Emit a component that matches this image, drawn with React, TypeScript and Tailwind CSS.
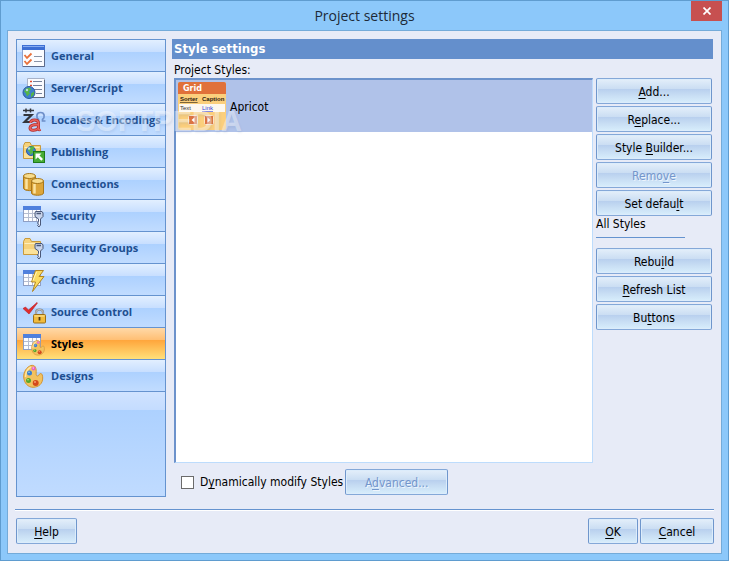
import { Fragment } from 'react'
import type { ReactNode } from 'react'

function TableShape() {
  return (
    <g>
      <rect x="1.500" y="2.500" width="17" height="15" fill="#fdfdff" stroke="#8f9fc4" />
      <rect x="1" y="2" width="18" height="4" fill="#4f80dd" />
      <path d="M2 9.500H18M2 13.500H18M6.500 6V17M10.500 6V17M14.500 6V17" stroke="#b5bdd0" fill="none" />
    </g>
  )
}

function FolderShape() {
  return (
    <g>
      <path d="M1.500 5.500 3 2.500h5l1.500 3h9v13h-17z" fill="#f6d27c" stroke="#c99a3c" />
      <path d="M2.500 7.500h15" stroke="#fdeebc" />
      <path d="M2 13h16v5h-16z" fill="#fbe29a" />
    </g>
  )
}

function KeyShape() {
  return (
    <g stroke="#4a5878" strokeLinejoin="round">
      <path d="M13.500 7.500h6.500l1 1.500v3.500l-2.500 2.500v6l-1.500 2-1.500-1.500 1-1.200-1-1.300 1-1.500V15l-3.500-2.500V9z" fill="#c9d4ea" />
      <path d="M14.500 9.500h4.500" strokeWidth="1.500" />
      <path d="M17.500 14.500v6" stroke="#f4f7ff" />
    </g>
  )
}

function GlobeShape({ cx, cy, r }: { cx: number; cy: number; r: number }) {
  return (
    <g>
      <circle cx={cx} cy={cy} r={r} fill="#3f7fd0" stroke="#2a5a9c" />
      <path
        d={`M${cx - r + 1} ${cy - 1}l2-3 4-1 1 2-2 2 1 2-3 3-1-3zM${cx + 2} ${cy + 1}l3-2v3l-3 3z`}
        fill="#55b548"
      />
      <circle cx={cx - 2} cy={cy - 2.5} r="1.200" fill="#cfe8ff" opacity="0.8" />
    </g>
  )
}

function PaletteShape() {
  return (
    <g>
      <path
        d="M9 1.500C4.500 3 1.500 8 1.700 13c.3 6 4.300 10.300 9.300 10.300 6 0 9.700-4 9.700-9.300 0-2.500-.7-4.500-2-4.500-1.700 0-1.700 2.500-3 2.500-2 0-1.500-2.200-1.500-4.500C14.200 3.500 13 .700 9 1.500z"
        fill="#f2c260"
        stroke="#d39434"
      />
      <path d="M3.500 13c0-4.500 2.500-8.500 5.500-10" fill="none" stroke="#fde6a4" strokeWidth="1.500" />
      <circle cx="11.500" cy="4.500" r="2" fill="#e85fc8" />
      <circle cx="11.300" cy="4" r="0.700" fill="#fbd3f2" />
      <circle cx="7.500" cy="9" r="2.500" fill="#3a80ce" />
      <circle cx="7" cy="8.300" r="0.800" fill="#a9d3f7" />
      <circle cx="6.500" cy="16.500" r="2.500" fill="#55a62c" />
      <circle cx="6" cy="15.800" r="0.800" fill="#bde794" />
      <circle cx="13.700" cy="19" r="3" fill="#d44a1c" />
      <circle cx="13" cy="18" r="0.900" fill="#f6a67a" />
    </g>
  )
}

const icons: Record<string, ReactNode> = {
  general: (
    <g>
      <rect x="0.500" y="1.500" width="22" height="21" fill="#fbfcff" stroke="#8fa3cf" />
      <path d="M1 22.500h21.500V3" fill="none" stroke="#5b6a8c" />
      <rect x="0" y="1" width="23" height="5" fill="#3d6fd4" />
      <path d="M1 2.500h21" stroke="#86acf2" />
      <path d="M2.500 11l2.500 3 4.500-4.500M2.500 17l2.500 3 4.500-4.500" fill="none" stroke="#e8703c" strokeWidth="1.800" />
      <path d="M12 12.500h8M12 17.500h8" stroke="#8a94a8" />
    </g>
  ),
  server: (
    <g>
      <path d="M5.500 2.500h17v19h-17z" fill="#fafbfe" stroke="#a8b2c8" />
      <path d="M7 21.500h15.500V4" fill="none" stroke="#5f6b82" />
      <path d="M8 5.500h2M8 9.500h2" stroke="#df4a2c" strokeWidth="1.500" />
      <path d="M11 5.500h9M11 9.500h9M12 13.500h8M14 17.500h6" stroke="#75829c" />
      <GlobeShape cx={7} cy={16.5} r={6} />
    </g>
  ),
  locales: (
    <g fill="none">
      <path d="M1 2.500h11M4 .5v4M8.500 .5v4" stroke="#33363d" strokeWidth="1.500" />
      <path d="M1.500 7h8l-7 7h7.500" stroke="#33363d" strokeWidth="2.200" />
      <path d="M13.500 13h3v-1.500C14 9.500 14 4.500 18.500 4.500s4.500 5 2 7V13h3" stroke="#6e8fc9" strokeWidth="1.700" />
      <path
        d="M8.500 15c0-2.500 2-3 4-3 3 0 4 1 4 3.500v5.500c0 1 1 1 2 .5M16 16.500c-5 0-8 .5-8 3.500s5.500 3 8 .5"
        stroke="#b02a2a"
        strokeWidth="3"
      />
      <path
        d="M8.500 15c0-2.500 2-3 4-3 3 0 4 1 4 3.500v5.500c0 1 1 1 2 .5M16 16.500c-5 0-8 .5-8 3.500s5.500 3 8 .5"
        stroke="#e8615c"
        strokeWidth="1.600"
      />
    </g>
  ),
  publishing: (
    <g>
      <FolderShape />
      <GlobeShape cx={9} cy={11} r={4.5} />
      <rect x="11.500" y="11.500" width="11" height="11" fill="#46ac35" stroke="#1f7a1a" />
      <path d="M13.500 13.500h6l-2 2 3.500 3.500-1.700 1.700-3.500-3.500-2.300 2.300z" fill="#fff" />
    </g>
  ),
  connections: (
    <g stroke="#a8781c">
      <path d="M1.500 4v12c0 3.500 12 3.500 12 0V4z" fill="#dda63a" />
      <path d="M4.500 7v10" stroke="#fbe3a0" strokeWidth="2.500" />
      <ellipse cx="7.500" cy="4" rx="6" ry="2.500" fill="#f8dc8c" />
      <path d="M9.500 9v12c0 3 12 3 12 0V9z" fill="#dda63a" />
      <path d="M12.500 12v9.500" stroke="#fbe3a0" strokeWidth="2.500" />
      <ellipse cx="15.500" cy="9" rx="6" ry="2.500" fill="#f8dc8c" />
    </g>
  ),
  security: (
    <g>
      <TableShape />
      <KeyShape />
    </g>
  ),
  groups: (
    <g>
      <FolderShape />
      <KeyShape />
    </g>
  ),
  caching: (
    <g>
      <TableShape />
      <path d="M13.500 2.500h8l-4.500 6h5L10.500 23.500l3-9.500H9.500z" fill="#fbdc62" stroke="#b38520" strokeLinejoin="round" />
      <path d="M14.500 4l-3.500 8.500" stroke="#fff5c0" />
    </g>
  ),
  source: (
    <g>
      <path d="M1 8.500l2.500-1.500 3 3L15 2.500l.5.500L7 14z" fill="#e02d2d" stroke="#b81f26" strokeWidth="0.600" />
      <path d="M14 15v-2.500c0-4 7-4 7 0V15" fill="none" stroke="#858585" strokeWidth="2.200" />
      <path d="M14 15v-2.500c0-4 7-4 7 0V15" fill="none" stroke="#dcdcdc" strokeWidth="0.800" />
      <rect x="11.500" y="14.500" width="12" height="8.500" rx="1" fill="#f1bb3c" stroke="#9b6f16" />
      <path d="M12.500 16h10" stroke="#fde79c" />
      <path d="M17.500 17v3.500" stroke="#4b3714" strokeWidth="1.800" />
    </g>
  ),
  styles: (
    <g>
      <TableShape />
      <g transform="translate(8.500 7.500) scale(0.67)">
        <PaletteShape />
      </g>
    </g>
  ),
  designs: <PaletteShape />,
}

const sections = [
  { id: 'general', label: 'General' },
  { id: 'server', label: 'Server/Script' },
  { id: 'locales', label: 'Locales & Encodings' },
  { id: 'publishing', label: 'Publishing' },
  { id: 'connections', label: 'Connections' },
  { id: 'security', label: 'Security' },
  { id: 'groups', label: 'Security Groups' },
  { id: 'caching', label: 'Caching' },
  { id: 'source', label: 'Source Control' },
  { id: 'styles', label: 'Styles' },
  { id: 'designs', label: 'Designs' },
]

// "&" marks the mnemonic letter, as in native dialog resources
function Mnemonic({ text }: { text: string }) {
  const at = text.indexOf('&')
  if (at < 0) return <Fragment>{text}</Fragment>
  return (
    <span>
      {text.slice(0, at)}
      <span className="underline underline-offset-2">{text[at + 1]}</span>
      {text.slice(at + 2)}
    </span>
  )
}

function DialogButton({ text, className, disabled }: { text: string; className?: string; disabled?: boolean }) {
  return (
    <button
      type="button"
      disabled={disabled}
      className={`flex h-[26px] items-center justify-center rounded-[2px] border border-[#84a8d8] border-r-[#6f96cc] border-l-[#6f96cc] bg-[linear-gradient(#e4effa_0%,#cbdef3_40%,#b8cfee_42%,#c6dcf3_65%,#d8eefc_100%)] pt-px shadow-[inset_0_0_0_1px_#dcecfb] text-black disabled:text-[#7396cc] disabled:[text-shadow:1px_1px_0_#eef5fd] ${className ?? ''}`}
    >
      <Mnemonic text={text} />
    </button>
  )
}

function Sidebar() {
  return (
    <nav className="flex w-[150px] shrink-0 flex-col border border-[#6593cf] bg-[#b4d5ff]">
      {sections.map((section) => (
        <button
          key={section.id}
          type="button"
          className={`flex h-8 shrink-0 items-center gap-[5px] border-b border-[#6593cf] pl-[5px] text-left font-['Open_Sans',sans-serif] text-[11px] font-bold whitespace-nowrap ${
            section.id === 'styles'
              ? 'bg-[linear-gradient(#ffd9a8_0%,#ffbf74_38%,#ffa63c_40%,#ffe07a_100%)] text-black'
              : 'bg-[linear-gradient(#e2efff_0%,#c8dfff_38%,#add1ff_40%,#c1dcff_100%)] text-[#1e4f91]'
          }`}
        >
          <svg viewBox="0 0 24 24" className="size-6 shrink-0" aria-hidden="true">
            {icons[section.id]}
          </svg>
          {section.label}
        </button>
      ))}
      <div className="h-[18px] bg-[linear-gradient(#d0e3ff,#c4dcff)]" />
      <div className="flex-1 bg-[linear-gradient(#add1ff,#c0dbff)]" />
    </nav>
  )
}

function StyleThumbnail() {
  return (
    <svg viewBox="0 0 48 48" className="size-12 shrink-0" aria-hidden="true">
      <rect width="48" height="48" rx="2" fill="#fbcf7c" />
      <path d="M0 12V2q0-2 2-2h44q2 0 2 2v10z" fill="#e0713a" />
      <rect x="1" y="22" width="46" height="8" fill="#fdf8ef" />
      <text x="5" y="9" fontFamily="DejaVu Sans" fontWeight="bold" fontSize="8" fill="#fff">Grid</text>
      <text x="2" y="19" fontFamily="Liberation Sans" fontWeight="bold" fontSize="6" fill="#2b2010" textDecoration="underline">Sorter</text>
      <text x="24" y="19" fontFamily="Liberation Sans" fontWeight="bold" fontSize="6" fill="#2b2010">Caption</text>
      <text x="2" y="28" fontFamily="Liberation Sans" fontSize="6" fill="#333">Text</text>
      <text x="24" y="28" fontFamily="Liberation Sans" fontSize="6" fill="#3342d8" textDecoration="underline">Link</text>
      <rect x="10.500" y="33.500" width="9" height="9" rx="1" fill="#dd7440" stroke="#fbe6c8" />
      <rect x="26.500" y="33.500" width="9" height="9" rx="1" fill="#dd7440" stroke="#fbe6c8" />
      <path d="M16.500 35.500v5l-3-2.500zM29.500 35.500v5l3-2.500z" fill="#fff" />
    </svg>
  )
}

export default function App() {
  return (
    <div className="relative flex min-h-screen flex-col border border-[#5f9ccf] bg-[#8cc8fa] px-[6px] pb-[6px] font-['DejaVu_Sans_Condensed','DejaVu_Sans',sans-serif] text-[12px] leading-4 text-black">
      <header className="relative flex h-[29px] shrink-0 items-center justify-center">
        <h1 className="font-['Open_Sans',sans-serif] text-[14px] text-[#1c2a38]">Project settings</h1>
        <button type="button" aria-label="Close" className="absolute top-0 right-0 flex h-5 w-[31px] items-center justify-center bg-[#c75050]">
          <svg viewBox="0 0 8 8" className="size-2" aria-hidden="true">
            <path d="M.5.5l7 7M7.500.5l-7 7" stroke="#fff" strokeWidth="1.700" />
          </svg>
        </button>
      </header>

      <div className="flex flex-1 flex-col border border-[#74abd9] bg-[#e7ebf7] px-2 pt-2 pb-[9px]">
        <div className="flex flex-1 gap-[6px]">
          <Sidebar />
          <main className="flex min-w-0 flex-1 flex-col">
            <h2 className="h-5 bg-[#648fcc] px-[2px] text-[13px] leading-5 font-bold text-white">Style settings</h2>
            <div className="mt-[3px] px-[2px]">Project Styles:</div>
            <div className="flex flex-1 gap-[3px] pr-px pl-[2px]">
              <ul className="flex-1 border-t-2 border-r border-b border-l-2 border-t-[#6c92cb] border-r-[#bddcfc] border-b-[#bddcfc] border-l-[#6c92cb] bg-white">
                <li className="flex h-[52px] items-center gap-1 bg-[#b0c2e9] pl-[2px]">
                  <StyleThumbnail />
                  <span className="pt-[2px]">Apricot</span>
                </li>
              </ul>
              <div className="flex w-[116px] flex-col gap-[2px]">
                <DialogButton text="&Add..." />
                <DialogButton text="R&eplace..." />
                <DialogButton text="Style &Builder..." />
                <DialogButton text="Remo&ve" disabled />
                <DialogButton text="Set defau&lt" />
                <div className="mb-2 h-5 w-[89px] border-b border-[#6593cf] leading-3">All Styles</div>
                <DialogButton text="Rebu&ild" />
                <DialogButton text="&Refresh List" />
                <DialogButton text="Bu&ttons" />
              </div>
            </div>
            <div className="mt-[6px] mb-[2px] flex items-center gap-[2px] pl-[9px]">
              <label className="flex items-center gap-[6px]">
                <input type="checkbox" className="size-[13px] appearance-none border border-[#6b6b6b] bg-white" />
                <Mnemonic text="D&ynamically modify Styles" />
              </label>
              <DialogButton text="A&dvanced..." className="w-[103px]" disabled />
            </div>
          </main>
        </div>
        <footer className="-mx-px mt-3 flex gap-[2px] border-t border-[#6593cf] pt-2 pl-px shadow-[inset_0_1px_0_#fff]">
          <DialogButton text="&Help" className="mr-auto w-[61px]" />
          <DialogButton text="&OK" className="w-[50px]" />
          <DialogButton text="&Cancel" className="w-[74px]" />
        </footer>
      </div>

      <div
        aria-hidden="true"
        className="pointer-events-none absolute top-[104px] left-[75px] font-['Liberation_Sans',sans-serif] text-[29px] leading-8 font-bold text-white/40 [text-shadow:1px_2px_2px_rgba(110,130,170,0.12)]"
      >
        SOFTPEDIA
      </div>
    </div>
  )
}
